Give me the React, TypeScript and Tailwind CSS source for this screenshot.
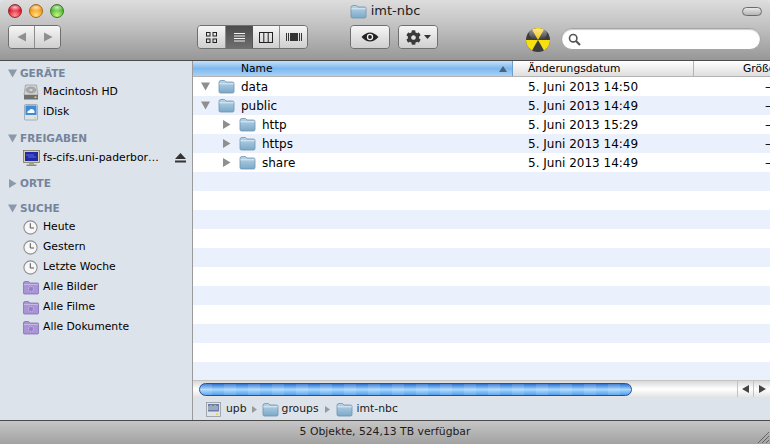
import { ReactNode } from 'react';
import { FaCog } from 'react-icons/fa';

// Finder-Fenster, Listenansicht

function Folder() {
    return (
        <svg width={17} height={15} viewBox="0 0 17 15" className="shrink-0">
            <defs>
                <linearGradient id="fold" x1="0" y1="0" x2="0" y2="1">
                    <stop offset="0" stopColor="#b9d5e8" />
                    <stop offset="1" stopColor="#7ba9c9" />
                </linearGradient>
            </defs>
            <path d="M1 3.5 Q1 1.5 3 1.5 H6.5 L8 3 H14.5 Q16 3 16 4.5 V12.5 Q16 14 14.5 14 H2.5 Q1 14 1 12.5 Z" fill="url(#fold)" stroke="#6f93ad" strokeWidth="0.8" />
            <path d="M1.4 4.8 H15.6" stroke="#dcebf5" strokeWidth="1" />
        </svg>
    );
}

function Tri({ open, color = '#8f8f8f' }: { open: boolean; color?: string }) {
    return (
        <svg width={9} height={9} viewBox="0 0 9 9" className="shrink-0">
            {open ? <path d="M0 0.5 H9 L4.5 8.5 Z" fill={color} /> : <path d="M1 0 L8.5 4.5 L1 9 Z" fill={color} />}
        </svg>
    );
}

function HardDisk() {
    return (
        <svg width={16} height={16} viewBox="0 0 16 16">
            <path d="M2.5 1 H13.5 L15 11 H1 Z" fill="#d2d2d2" stroke="#8c8c8c" strokeWidth="0.6" />
            <ellipse cx="8" cy="6" rx="5" ry="3" fill="#a9a9a9" stroke="#8a8a8a" strokeWidth="0.5" />
            <ellipse cx="8" cy="6" rx="1.5" ry="0.9" fill="#dcdcdc" />
            <rect x="1" y="11" width="14" height="4.5" fill="#6f6f6f" />
            <rect x="11.5" y="12.5" width="2" height="1.5" fill="#e8d64a" />
        </svg>
    );
}

function IDisk() {
    return (
        <svg width={16} height={17} viewBox="0 0 16 17">
            <rect x="1.5" y="0.5" width="13" height="15.5" rx="1" fill="#dfe3e8" stroke="#8d97a3" strokeWidth="0.7" />
            <rect x="2.5" y="1.5" width="11" height="9.5" fill="#3f8bd6" />
            <path d="M4.5 9 Q4 6.5 6.2 6.5 Q7 4.2 9.5 5.2 Q11.8 5.6 11.5 9 Z" fill="#ffffff" />
            <rect x="11" y="13" width="2" height="1.5" fill="#e8d64a" />
        </svg>
    );
}

function Monitor() {
    return (
        <svg width={17} height={17} viewBox="0 0 17 17">
            <rect x="0.5" y="0.5" width="16" height="12" fill="#d8cfa8" stroke="#6e6a55" strokeWidth="0.7" />
            <rect x="2" y="2" width="13" height="9" fill="#1f2aa8" />
            <path d="M3 5 H11 M5 7 H13" stroke="#5a6be0" strokeWidth="1" />
            <rect x="6" y="12.5" width="5" height="2" fill="#a9a283" />
            <rect x="3.5" y="14.5" width="10" height="1.5" fill="#8f8970" />
        </svg>
    );
}

function ClockIcon() {
    return (
        <svg width={15} height={15} viewBox="0 0 15 15">
            <circle cx="7.5" cy="7.5" r="6.6" fill="#f7f7f7" stroke="#8f8f8f" strokeWidth="1.1" />
            <path d="M7.3 3.2 V8 H11" fill="none" stroke="#555555" strokeWidth="1" />
        </svg>
    );
}

function SmartFolder() {
    return (
        <svg width={16} height={15} viewBox="0 0 16 15">
            <path d="M0.5 3 Q0.5 1.5 2 1.5 H5.5 L7 3 H14.5 Q15.5 3 15.5 4 V13 Q15.5 14 14.5 14 H1.5 Q0.5 14 0.5 13 Z" fill="#a995d6" stroke="#7a66ad" strokeWidth="0.7" />
            <path d="M1 4.5 H15" stroke="#c8b8e8" strokeWidth="1" />
            <circle cx="8" cy="9" r="2.6" fill="#9380c4" stroke="#c2b2e2" strokeWidth="1.2" strokeDasharray="1.2 0.8" />
        </svg>
    );
}

function Nuclear() {
    return (
        <svg width={24} height={24} viewBox="0 0 24 24">
            <defs>
                <linearGradient id="nukeGloss" x1="0" y1="0" x2="0" y2="1">
                    <stop offset="0" stopColor="#ffffff" stopOpacity="0.55" />
                    <stop offset="1" stopColor="#ffffff" stopOpacity="0" />
                </linearGradient>
            </defs>
            <circle cx="12" cy="12" r="12" fill="#3c3c3c" />
            <path d="M12 12 L6 1.6 A12 12 0 0 1 18 1.6 Z" fill="#f2c90f" />
            <path d="M12 12 L24 12 A12 12 0 0 1 18 22.4 Z" fill="#f6e010" />
            <path d="M12 12 L6 22.4 A12 12 0 0 1 0 12 Z" fill="#f6e010" />
            <ellipse cx="12" cy="6" rx="9" ry="5.5" fill="url(#nukeGloss)" />
        </svg>
    );
}

function ToolButton({ children, className = '' }: { children: ReactNode; className?: string }) {
    return (
        <div className={`h-[22px] flex items-center justify-center bg-gradient-to-b from-[#f6f6f6] to-[#cfcfcf] ${className}`}>
            {children}
        </div>
    );
}

function SideHead({ label, open = true, className = '' }: { label: string; open?: boolean; className?: string }) {
    return (
        <div className={`h-[17px] flex items-center pl-[8px] gap-[3px] text-[10.5px] font-bold text-[#75849a] ${className}`}>
            <Tri open={open} color="#8c99aa" />
            <span>{label}</span>
        </div>
    );
}

function SideItem({ icon, label, right }: { icon: ReactNode; label: string; right?: ReactNode }) {
    return (
        <div className="h-[20px] flex items-center text-[10.8px] text-black">
            <div className="w-[43px] pl-[23px] shrink-0 flex items-center">{icon}</div>
            <span className="whitespace-nowrap">{label}</span>
            {right}
        </div>
    );
}

const rows = [
    { name: 'data', date: '5. Juni 2013 14:50', depth: 0, open: true },
    { name: 'public', date: '5. Juni 2013 14:49', depth: 0, open: true },
    { name: 'http', date: '5. Juni 2013 15:29', depth: 1, open: false },
    { name: 'https', date: '5. Juni 2013 14:49', depth: 1, open: false },
    { name: 'share', date: '5. Juni 2013 14:49', depth: 1, open: false },
];

const stripes = Array.from({ length: 16 }, (_, i) => i + 5);

export default function App() {
    return (
        <div className="w-[770px] h-[444px] overflow-hidden flex flex-col bg-[#dce3eb] text-black font-['DejaVu_Sans','Liberation_Sans',sans-serif]">
            {/* Titelleiste und Werkzeuge */}
            <div className="h-[61px] shrink-0 border-b border-[#4b4b4b] bg-gradient-to-b from-[#dddddd] via-[#bdbdbd] to-[#979797] rounded-t-[5px] flex flex-col">
                <div className="h-[25px] relative flex items-center justify-center gap-[4px] text-[13px] text-[#1c1c1c] pb-[3px]">
                    <div className="absolute left-[8px] top-[4px] flex gap-[7px]">
                        <span className="w-[14px] h-[14px] rounded-full border border-[#8f2a2a] bg-[radial-gradient(ellipse_60%_30%_at_50%_20%,rgba(255,255,255,0.75),transparent),radial-gradient(circle_at_50%_85%,#ff9a9a,#e0142c_60%,#a01020)]" />
                        <span className="w-[14px] h-[14px] rounded-full border border-[#a66a1a] bg-[radial-gradient(ellipse_60%_30%_at_50%_20%,rgba(255,255,255,0.75),transparent),radial-gradient(circle_at_50%_85%,#ffe08a,#f59a10_60%,#c07010)]" />
                        <span className="w-[14px] h-[14px] rounded-full border border-[#3d7a2a] bg-[radial-gradient(ellipse_60%_30%_at_50%_20%,rgba(255,255,255,0.75),transparent),radial-gradient(circle_at_50%_85%,#c6f58a,#4fb82a_60%,#2f8a20)]" />
                    </div>
                    <Folder />
                    <span>imt-nbc</span>
                    <div className="absolute right-[8px] top-[7px] w-[20px] h-[9px] rounded-full border border-[#6b6b6b] bg-gradient-to-b from-[#e8e8e8] to-[#b5b5b5]" />
                </div>
                <div className="flex items-start h-[24px] relative">
                    {/* Zurück / Vor */}
                    <div className="ml-[8px] w-[53px] flex rounded-[4px] border border-[#6f6f6f] overflow-hidden">
                        <ToolButton className="w-[26px] border-r border-[#8d8d8d]">
                            <svg width={10} height={10} viewBox="0 0 10 10"><path d="M9 0.5 V9.5 L0.5 5 Z" fill="#8f8f8f" /></svg>
                        </ToolButton>
                        <ToolButton className="flex-1">
                            <svg width={10} height={10} viewBox="0 0 10 10"><path d="M1 0.5 V9.5 L9.5 5 Z" fill="#8f8f8f" /></svg>
                        </ToolButton>
                    </div>
                    {/* Ansichten */}
                    <div className="ml-[136px] w-[111px] flex rounded-[4px] border border-[#6f6f6f] overflow-hidden">
                        <ToolButton className="w-[28px] border-r border-[#8d8d8d]">
                            <svg width={11} height={11} viewBox="0 0 11 11" fill="none" stroke="#222222" strokeWidth="1">
                                <rect x="0.5" y="0.5" width="3.5" height="3.5" /><rect x="7" y="0.5" width="3.5" height="3.5" />
                                <rect x="0.5" y="7" width="3.5" height="3.5" /><rect x="7" y="7" width="3.5" height="3.5" />
                            </svg>
                        </ToolButton>
                        <div className="w-[27px] h-[22px] flex items-center justify-center bg-gradient-to-b from-[#4c4c4c] to-[#6e6e6e] border-r border-[#555555]">
                            <svg width={13} height={11} viewBox="0 0 13 11" stroke="#f2f2f2" strokeWidth="1"><path d="M1 1.5 H12 M1 4 H12 M1 6.5 H12 M1 9 H12" /></svg>
                        </div>
                        <ToolButton className="w-[27px] border-r border-[#8d8d8d]">
                            <svg width={14} height={11} viewBox="0 0 14 11" fill="none" stroke="#222222" strokeWidth="1">
                                <rect x="0.5" y="0.5" width="13" height="10" /><path d="M4.8 0.5 V10.5 M9.2 0.5 V10.5" />
                            </svg>
                        </ToolButton>
                        <ToolButton className="flex-1">
                            <svg width={16} height={10} viewBox="0 0 16 10">
                                <rect x="4" y="1" width="8" height="8" fill="#333333" />
                                <path d="M0.5 1 V9 M2.5 1 V9 M13.5 1 V9 M15.5 1 V9" stroke="#333333" strokeWidth="1" />
                            </svg>
                        </ToolButton>
                    </div>
                    {/* Übersicht */}
                    <div className="ml-[42px] w-[40px] rounded-[4px] border border-[#6f6f6f] overflow-hidden">
                        <ToolButton>
                            <svg width={18} height={12} viewBox="0 0 18 12">
                                <path d="M0.5 6 Q9 -3 17.5 6 Q9 15 0.5 6 Z" fill="#222222" />
                                <circle cx="9" cy="6" r="3.2" fill="#f0f0f0" />
                                <circle cx="9" cy="6" r="1.9" fill="#222222" />
                            </svg>
                        </ToolButton>
                    </div>
                    {/* Aktion */}
                    <div className="ml-[8px] w-[40px] rounded-[4px] border border-[#6f6f6f] overflow-hidden">
                        <ToolButton className="gap-[3px]">
                            <FaCog className="text-[15px] text-[#3a3a3a]" />
                            <svg width={7} height={4} viewBox="0 0 7 4"><path d="M0 0 H7 L3.5 4 Z" fill="#333333" /></svg>
                        </ToolButton>
                    </div>
                    <div className="ml-[88px] mt-[3px]"><Nuclear /></div>
                    {/* Suche */}
                    <div className="ml-[11px] mt-[3px] w-[200px] h-[22px] rounded-full bg-white border border-[#a5a5a5] shadow-[inset_0_1px_1px_rgba(0,0,0,0.2)] flex items-center pl-[6px]">
                        <svg width={13} height={13} viewBox="0 0 13 13" fill="none" stroke="#555555">
                            <circle cx="5.2" cy="5.2" r="3.7" strokeWidth="1.6" />
                            <path d="M8 8 L12 12" strokeWidth="2.2" />
                        </svg>
                    </div>
                </div>
            </div>

            <div className="flex-1 min-h-0 flex">
                {/* Seitenleiste */}
                <aside className="w-[193px] shrink-0 border-r border-[#9a9a9a] bg-[#dce3eb] pt-[4px] overflow-hidden">
                    <SideHead label="GERÄTE" />
                    <SideItem icon={<HardDisk />} label="Macintosh HD" />
                    <SideItem icon={<IDisk />} label="iDisk" />
                    <SideHead label="FREIGABEN" className="mt-[8px] pb-[1px] !h-[18px]" />
                    <SideItem
                        icon={<Monitor />}
                        label="fs-cifs.uni-paderbor…"
                        right={
                            <svg width={11} height={10} viewBox="0 0 11 10" className="ml-auto mr-[6px] shrink-0">
                                <path d="M5.5 0 L11 6 H0 Z" fill="#333333" /><rect y="7.5" width="11" height="2" fill="#333333" />
                            </svg>
                        }
                    />
                    <SideHead label="ORTE" open={false} className="mt-[7px]" />
                    <SideHead label="SUCHE" className="mt-[8px]" />
                    <SideItem icon={<ClockIcon />} label="Heute" />
                    <SideItem icon={<ClockIcon />} label="Gestern" />
                    <SideItem icon={<ClockIcon />} label="Letzte Woche" />
                    <SideItem icon={<SmartFolder />} label="Alle Bilder" />
                    <SideItem icon={<SmartFolder />} label="Alle Filme" />
                    <SideItem icon={<SmartFolder />} label="Alle Dokumente" />
                </aside>

                <main className="flex-1 min-w-0 flex flex-col overflow-hidden">
                    {/* Spaltenköpfe */}
                    <div className="h-[16px] shrink-0 flex text-[10.7px] border-b border-[#b4b4b4]">
                        <div className="w-[320px] shrink-0 pl-[48px] pr-[5px] pt-[1px] flex items-center justify-between bg-gradient-to-b from-[#c6e0f8] via-[#7db8ef] to-[#a8d2f5] border-r border-[#6c9fd0]">
                            <span>Name</span>
                            <svg width={8} height={6} viewBox="0 0 8 6"><path d="M4 0 L8 6 H0 Z" fill="#4a6480" /></svg>
                        </div>
                        <div className="w-[181px] shrink-0 pl-[15px] pt-[1px] flex items-center bg-gradient-to-b from-[#ffffff] to-[#dedede] border-r border-[#b4b4b4]">Änderungsdatum</div>
                        <div className="flex-1 pl-[49px] pt-[1px] flex items-center bg-gradient-to-b from-[#ffffff] to-[#dedede] whitespace-nowrap overflow-hidden">Größe</div>
                    </div>

                    {/* Dateiliste */}
                    <div className="flex-1 min-h-0 overflow-hidden bg-white">
                        {rows.map((r, i) => (
                            <div key={r.name} className={`h-[19px] flex items-center text-[12px] ${i % 2 ? 'bg-[#ebf1fc]' : 'bg-white'}`}>
                                <div className={`w-[320px] shrink-0 flex items-center ${r.depth ? 'pl-[29px]' : 'pl-[8px]'}`}>
                                    <Tri open={r.open} />
                                    <div className="ml-[8px] mr-[6px] flex"><Folder /></div>
                                    <span>{r.name}</span>
                                </div>
                                <div className="w-[181px] shrink-0 pl-[15px] whitespace-nowrap">{r.date}</div>
                                <div className="flex-1 pl-[71px]">–</div>
                            </div>
                        ))}
                        {stripes.map((i) => (
                            <div key={i} className={`h-[19px] ${i % 2 ? 'bg-[#ebf1fc]' : 'bg-white'}`} />
                        ))}
                    </div>

                    {/* Rollbalken */}
                    <div className="h-[17px] shrink-0 flex items-center bg-gradient-to-b from-[#d8d8d8] via-[#ffffff] to-[#e4e4e4] border-t border-[#c4c4c4]">
                        <div className="ml-[6px] w-[433px] h-[13px] rounded-full border border-[#27509a] bg-[repeating-linear-gradient(90deg,rgba(255,255,255,0.12)_0px,rgba(255,255,255,0.12)_12px,transparent_12px,transparent_24px),linear-gradient(to_bottom,#2f72d0,#a8d8fb_50%,#4f9df0)]" />
                        <div className="flex-1 h-full rounded-r-full" />
                        <div className="w-[16px] h-full flex items-center justify-center border-l border-[#c4c4c4]">
                            <svg width={7} height={8} viewBox="0 0 7 8"><path d="M7 0 V8 L0 4 Z" fill="#444444" /></svg>
                        </div>
                        <div className="w-[17px] h-full flex items-center justify-center border-l border-[#c4c4c4]">
                            <svg width={7} height={8} viewBox="0 0 7 8"><path d="M0 0 V8 L7 4 Z" fill="#444444" /></svg>
                        </div>
                    </div>

                    {/* Pfadleiste */}
                    <div className="h-[23px] shrink-0 bg-[#dce3eb] flex items-center pl-[13px] pt-[1px] text-[10.8px] text-[#1a1a1a]">
                        <svg width={15} height={15} viewBox="0 0 15 15" className="mr-[5px]">
                            <rect x="0.5" y="0.5" width="14" height="14" fill="#dfe3ea" stroke="#8a8f98" strokeWidth="0.7" />
                            <rect x="2" y="2" width="11" height="7.5" fill="#6d7fa0" />
                            <path d="M3 4 V8 M5 3 V8 M7 4 V8 M9 3 V8 M11 4 V8" stroke="#e6e9f0" strokeWidth="0.8" />
                            <rect x="10" y="11.5" width="2" height="1.5" fill="#e8d64a" />
                        </svg>
                        <span>upb</span>
                        <svg width={5} height={7} viewBox="0 0 5 7" className="mx-[5px]"><path d="M0 0 L5 3.5 L0 7 Z" fill="#9a9a9a" /></svg>
                        <Folder />
                        <span className="ml-[3px]">groups</span>
                        <svg width={5} height={7} viewBox="0 0 5 7" className="mx-[6px]"><path d="M0 0 L5 3.5 L0 7 Z" fill="#9a9a9a" /></svg>
                        <Folder />
                        <span className="ml-[4px]">imt-nbc</span>
                    </div>
                </main>
            </div>

            {/* Statusleiste */}
            <div className="h-[24px] shrink-0 relative border-t border-[#4b4b4b] bg-gradient-to-b from-[#c6c6c6] to-[#a2a2a2] flex items-center justify-center text-[10.8px] text-[#1c1c1c]">
                5 Objekte, 524,13 TB verfügbar
                <svg width={12} height={12} viewBox="0 0 12 12" className="absolute right-[1px] bottom-[1px]" stroke="#666666" strokeWidth="1">
                    <path d="M1 12 L12 1 M5 12 L12 5 M9 12 L12 9" />
                </svg>
            </div>
        </div>
    );
}
